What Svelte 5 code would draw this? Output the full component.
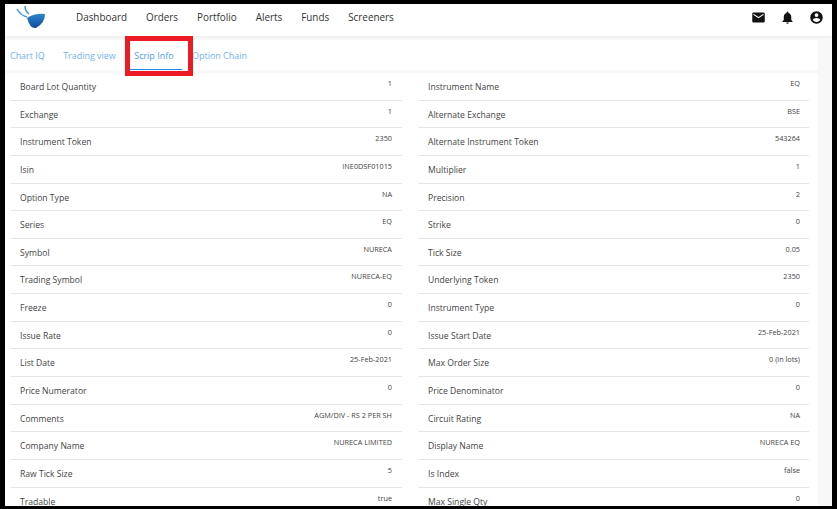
<script>
  const nav = ['Dashboard', 'Orders', 'Portfolio', 'Alerts', 'Funds', 'Screeners'];
  const tabs = ['Chart IQ', 'Trading view', 'Scrip Info', 'Option Chain'];
  const left = [
    ['Board Lot Quantity', '1'], ['Exchange', '1'], ['Instrument Token', '2350'], ['Isin', 'INE0DSF01015'],
    ['Option Type', 'NA'], ['Series', 'EQ'], ['Symbol', 'NURECA'], ['Trading Symbol', 'NURECA-EQ'],
    ['Freeze', '0'], ['Issue Rate', '0'], ['List Date', '25-Feb-2021'], ['Price Numerator', '0'],
    ['Comments', 'AGM/DIV - RS 2 PER SH'], ['Company Name', 'NURECA LIMITED'], ['Raw Tick Size', '5'], ['Tradable', 'true']
  ];
  const right = [
    ['Instrument Name', 'EQ'], ['Alternate Exchange', 'BSE'], ['Alternate Instrument Token', '543264'], ['Multiplier', '1'],
    ['Precision', '2'], ['Strike', '0'], ['Tick Size', '0.05'], ['Underlying Token', '2350'],
    ['Instrument Type', '0'], ['Issue Start Date', '25-Feb-2021'], ['Max Order Size', '0 (in lots)'], ['Price Denominator', '0'],
    ['Circuit Rating', 'NA'], ['Display Name', 'NURECA EQ'], ['Is Index', 'false'], ['Max Single Qty', '0']
  ];
</script>

<div class="frame">
  <header class="top">
    <svg class="logo" width="30" height="24" viewBox="0 0 30 24">
      <defs>
        <linearGradient id="fish" x1="0" y1="0" x2="0" y2="1">
          <stop offset="0" stop-color="#2f86d0" />
          <stop offset="1" stop-color="#0f4a9a" />
        </linearGradient>
      </defs>
      <path d="M1 4 Q4 10 11 12" fill="none" stroke="#3f97d6" stroke-width="1.5" />
      <path d="M9 1 Q9 6 13 9" fill="none" stroke="#3f97d6" stroke-width="1.5" />
      <path d="M11 13 Q19 8 29 9 Q29 18 20 23 Q14 24 11 13 Z" fill="url(#fish)" />
    </svg>
    <nav class="nav">
      {#each nav as item}<span>{item}</span>{/each}
    </nav>
    <div class="icons">
      <svg width="15" height="15" viewBox="0 0 24 24"><path fill="#111" d="M20 4H4a2 2 0 0 0-2 2v12a2 2 0 0 0 2 2h16a2 2 0 0 0 2-2V6a2 2 0 0 0-2-2zm0 4-8 5-8-5V6l8 5 8-5v2z" /></svg>
      <svg width="15" height="15" viewBox="0 0 24 24"><path fill="#111" d="M12 22a2 2 0 0 0 2-2h-4a2 2 0 0 0 2 2zm6-6v-5c0-3.07-1.63-5.64-4.5-6.32V4a1.5 1.5 0 0 0-3 0v.68C7.64 5.36 6 7.92 6 11v5l-2 2v1h16v-1l-2-2z" /></svg>
      <svg width="15" height="15" viewBox="0 0 24 24"><path fill="#111" d="M12 2a10 10 0 1 0 0 20 10 10 0 0 0 0-20zm0 3a3 3 0 1 1 0 6 3 3 0 0 1 0-6zm0 14.2a7.2 7.2 0 0 1-6-3.22c.03-1.99 4-3.08 6-3.08s5.97 1.09 6 3.08a7.2 7.2 0 0 1-6 3.22z" /></svg>
    </div>
  </header>
  <div class="tabs">
    {#each tabs as tab}<span class="tab" class:active={tab === 'Scrip Info'}>{tab}</span>{/each}
  </div>
  <main class="card">
    <div class="col">
      {#each left as [k, v]}
        <div class="row"><span class="k">{k}</span><span class="v">{v}</span></div>
      {/each}
    </div>
    <div class="col second">
      {#each right as [k, v]}
        <div class="row"><span class="k">{k}</span><span class="v">{v}</span></div>
      {/each}
    </div>
  </main>
  <div class="mark"></div>
</div>

<style>
  :global(body) { margin: 0; background: #000; }
  .frame {
    position: relative;
    box-sizing: border-box;
    width: 827px;
    height: 502px;
    margin: 4px 0 0 5px;
    background: #f8f8f8;
    overflow: hidden;
    font-family: "Open Sans", sans-serif;
  }
  .top {
    display: flex;
    align-items: center;
    height: 32px;
    background: #fff;
    box-shadow: 0 1px 3px rgba(0, 0, 0, 0.05);
    position: relative;
  }
  .logo { margin-left: 11px; margin-bottom: 6px; flex: none; }
  .nav {
    display: flex;
    gap: 19px;
    margin-left: 30px;
    margin-bottom: 6px;
    font-size: 9.9px;
    color: #333;
  }
  .icons {
    margin-left: auto;
    display: flex;
    gap: 14px;
    margin-right: 8px;
    margin-bottom: 6px;
  }
  .tabs {
    display: flex;
    height: 30px;
    margin: 4px 0 3px;
    background: #fff;
    font-size: 8.95px;
    color: #6fb4f0;
    padding-left: 5px;
    gap: 18.5px;
    width: 813px;
    box-sizing: border-box;
  }
  .tab { padding-top: 9px; height: 20px; }
  .tab.active {
    color: #4a9ee8;
    border-bottom: 1px solid #1e88f0;
    padding-left: 5px;
    padding-right: 8px;
    margin: 0 -8px 0 -5px;
  }
  .card {
    display: flex;
    gap: 16px;
    width: 813px;
    box-sizing: border-box;
    padding: 0 9px 0 6px;
    background: #fff;
    border-radius: 3px;
  }
  .col { width: 391px; flex: none; }
  .row {
    height: 27.65px;
    box-sizing: border-box;
    border-bottom: 1px solid #e6e6e6;
    display: flex;
    justify-content: space-between;
    padding: 0 10px 0 9px;
  }
  .second .row { padding: 0 9px 0 10px; }
  .k { font-size: 8.6px; color: #444; padding-top: 8px; }
  .v { font-size: 7.3px; color: #444; padding-top: 5px; }
  .mark {
    position: absolute;
    left: 120px;
    top: 32px;
    width: 68px;
    height: 40px;
    box-sizing: border-box;
    border: 5px solid #ed1c24;
  }
</style>
